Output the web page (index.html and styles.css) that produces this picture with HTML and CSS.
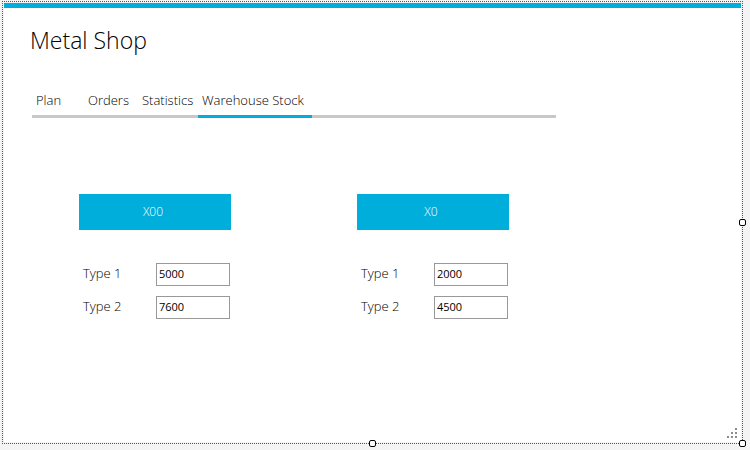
FILE: index.html
```html
<!DOCTYPE html>
<html lang="en">
<head>
<meta charset="utf-8">
<title>Metal Shop</title>
<link rel="stylesheet" href="styles.css">
</head>
<body>
<div class="frame">
  <main class="window">
    <h1 class="title">Metal Shop</h1>
    <div class="tabs" role="tablist">
      <button class="tab" type="button" role="tab">Plan</button>
      <button class="tab" type="button" role="tab">Orders</button>
      <button class="tab" type="button" role="tab">Statistics</button>
      <button class="tab active" type="button" role="tab" aria-selected="true">Warehouse Stock</button>
    </div>
    <div class="stock">
      <section class="group">
        <button class="tile" type="button">X00</button>
        <div class="fields">
          <label for="x00-1">Type 1</label><input id="x00-1" type="text" value="5000">
          <label for="x00-2">Type 2</label><input id="x00-2" type="text" value="7600">
        </div>
      </section>
      <section class="group">
        <button class="tile" type="button">X0</button>
        <div class="fields">
          <label for="x0-1">Type 1</label><input id="x0-1" type="text" value="2000">
          <label for="x0-2">Type 2</label><input id="x0-2" type="text" value="4500">
        </div>
      </section>
    </div>
    <svg class="grip" width="10" height="10" viewBox="0 0 10 10" fill="#8c8c8c" shape-rendering="crispEdges" aria-hidden="true">
      <path d="M8 0h2v2h-2zM4 4h2v2h-2zM8 4h2v2h-2zM0 8h2v2h-2zM4 8h2v2h-2zM8 8h2v2h-2z"/>
    </svg>
  </main>
  <span class="handle east"></span>
  <span class="handle south"></span>
  <span class="handle corner"></span>
</div>
</body>
</html>
```
FILE: styles.css
```css
* {
  box-sizing: border-box;
}

body {
  margin: 0;
  min-height: 100vh;
  display: flex;
  padding: 1px 7px 6px 2px;
  background: #f4f4f4;
  color: #000;
  font: 300 13px/20px "Open Sans", "Noto Sans", sans-serif;
}

button,
input {
  font: inherit;
  color: inherit;
}

.frame {
  position: relative;
  flex: 1;
  display: flex;
  padding: 1px;
  border: 1px dotted #555;
}

.window {
  position: relative;
  flex: 1;
  border-top: 5px solid #00aedb;
  background: #fff;
  padding: 16px 28px;
}

.title {
  margin: 0 0 32px -2px;
  font-size: 23px;
  font-weight: 300;
  line-height: 32px;
}

.tabs {
  display: grid;
  grid-template-columns: 52px 54px 60px 114px;
  max-width: 524px;
  height: 30px;
  box-shadow: inset 0 -3px #c8c8c8;
}

.tab {
  padding: 0 0 3px 4px;
  border: 0;
  border-bottom: 3px solid transparent;
  background: none;
  text-align: left;
  white-space: nowrap;
}

.tab.active {
  border-bottom-color: #00aedb;
}

.stock {
  display: flex;
  gap: 126px;
  padding: 76px 0 0 47px;
}

.group {
  width: 152px;
}

.tile {
  width: 100%;
  height: 36px;
  margin-bottom: 33px;
  padding: 0 4px 0 0;
  border: 0;
  background: #00aedb;
  color: #fff;
  font-size: 12px;
}

.fields {
  display: grid;
  grid-template-columns: 73px 74px;
  gap: 10px 0;
  padding-left: 4px;
}

.fields input {
  width: 100%;
  height: 23px;
  padding: 0 2px 2px;
  border: 1px solid #999;
  background: #fff;
  font-size: 11px;
  font-weight: 400;
}

.grip {
  position: absolute;
  right: 4px;
  bottom: 4px;
}

.handle {
  position: absolute;
  width: 7px;
  height: 7px;
  border: 1px solid #000;
  border-radius: 2px;
  background: #fff;
}

.east {
  right: -4px;
  top: calc(50% - 4px);
}

.south {
  bottom: -4px;
  left: calc(50% - 4px);
}

.corner {
  right: -4px;
  bottom: -4px;
}
```
